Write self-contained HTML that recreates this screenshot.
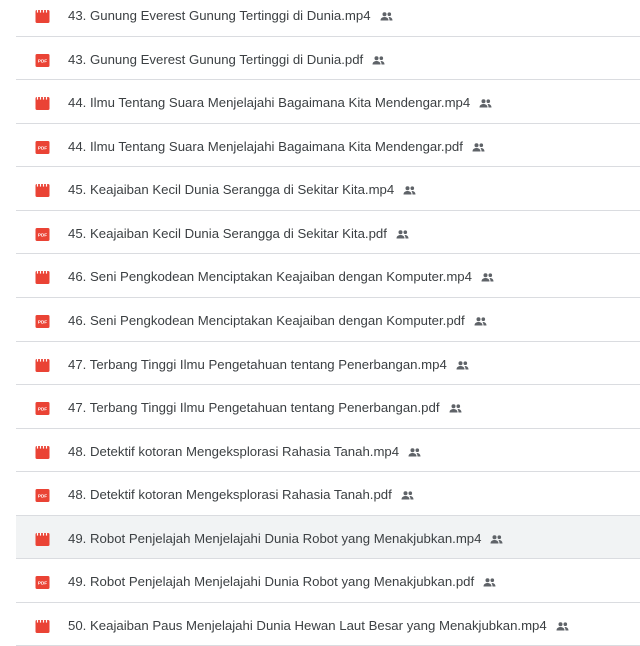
<!DOCTYPE html>
<html><head><meta charset="utf-8"><style>
body{margin:0;width:640px;height:640px;overflow:hidden;background:#fff;font-family:"Liberation Sans",sans-serif;}
.wrap{position:absolute;top:-7px;left:0;width:640px}
.row{position:relative;height:43.57px;box-sizing:border-box;border-bottom:1px solid #dadce0;margin-left:16px;}
.row.hl{background:#f1f3f4}
.ic{position:absolute;left:19px;top:17px;width:15px;height:13px}
.t{position:absolute;left:52px;top:15px;font-size:13.2px;color:#3c4043;white-space:nowrap;line-height:16px}
.t svg{vertical-align:-1px;margin-left:9px}
</style></head><body><div class="wrap">
<script>
const items=["43. Gunung Everest Gunung Tertinggi di Dunia","44. Ilmu Tentang Suara Menjelajahi Bagaimana Kita Mendengar","45. Keajaiban Kecil Dunia Serangga di Sekitar Kita","46. Seni Pengkodean Menciptakan Keajaiban dengan Komputer","47. Terbang Tinggi Ilmu Pengetahuan tentang Penerbangan","48. Detektif kotoran Mengeksplorasi Rahasia Tanah","49. Robot Penjelajah Menjelajahi Dunia Robot yang Menakjubkan","50. Keajaiban Paus Menjelajahi Dunia Hewan Laut Besar yang Menakjubkan"];
const vid='<svg class="ic" viewBox="0 0 14 13"><rect x="0" y="0" width="14" height="13" rx="1.5" fill="#ea4335"/><path d="M2 0v3M5 0v3M8 0v3M11 0v3" stroke="#fff" stroke-width="1.2"/><rect x="0" y="2.6" width="14" height="0.8" fill="#ea4335"/></svg>';
const pdf='<svg class="ic" viewBox="0 0 14 13"><rect x="0" y="0" width="14" height="13" rx="1.5" fill="#ea4335"/><text x="7" y="8.5" font-size="4.6" font-family="Liberation Sans" font-weight="bold" fill="#fff" text-anchor="middle">PDF</text></svg>';
const ppl='<svg width="13" height="9" viewBox="0 0 13 9"><circle cx="4.5" cy="2.2" r="2" fill="#5f6368"/><circle cx="9.3" cy="2.2" r="1.8" fill="#5f6368"/><path d="M0.5 8.5c0-2.5 2-3.5 4-3.5s4 1 4 3.5z" fill="#5f6368"/><path d="M8.5 5c2 0 4 .8 4 3.5h-3c0-1.5-.4-2.6-1-3.5z" fill="#5f6368"/></svg>';
let h='';let i=0;
for(const it of items){for(const ext of ['mp4','pdf']){if(it.startsWith('50')&&ext==='pdf')continue;
h+='<div class="row'+(i===12?' hl':'')+'">'+(ext==='mp4'?vid:pdf)+'<div class="t">'+it+'.'+ext+ppl+'</div></div>';i++;}}
document.write(h);
</script>
</div></body></html>
